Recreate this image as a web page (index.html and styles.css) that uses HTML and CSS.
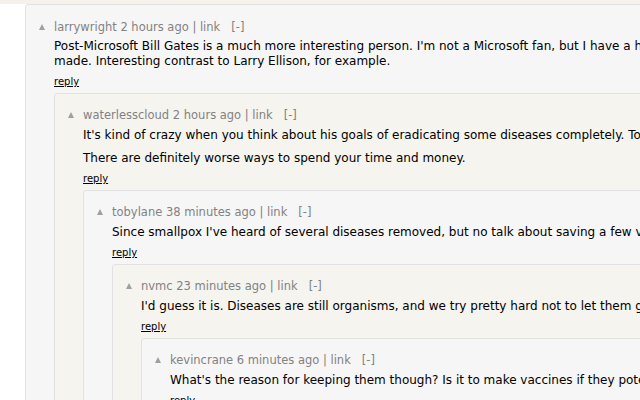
FILE: index.html
```html
<!DOCTYPE html>
<html>
<head>
<meta charset="utf-8">
<link rel="stylesheet" href="styles.css">
</head>
<body>
<div class="topbar"></div>
<div class="thread">
  <div class="comment gray">
    <div class="head"><span class="vote"></span><span class="meta">larrywright 2 hours ago | link</span><span class="toggle">[-]</span></div>
    <div class="body">
      <p>Post-Microsoft Bill Gates is a much more interesting person. I'm not a Microsoft fan, but I have a huge amount of respect for the choices he's<br>made. Interesting contrast to Larry Ellison, for example.</p>
      <a class="reply" href="#">reply</a>
      <div class="comment beige">
        <div class="head"><span class="vote"></span><span class="meta">waterlesscloud 2 hours ago | link</span><span class="toggle">[-]</span></div>
        <div class="body">
          <p>It's kind of crazy when you think about his goals of eradicating some diseases completely. Totally within reach, too.</p>
          <p>There are definitely worse ways to spend your time and money.</p>
          <a class="reply" href="#">reply</a>
          <div class="comment gray">
            <div class="head"><span class="vote"></span><span class="meta">tobylane 38 minutes ago | link</span><span class="toggle">[-]</span></div>
            <div class="body">
              <p>Since smallpox I've heard of several diseases removed, but no talk about saving a few viruses in a lab somewhere.</p>
              <a class="reply" href="#">reply</a>
              <div class="comment beige">
                <div class="head"><span class="vote"></span><span class="meta">nvmc 23 minutes ago | link</span><span class="toggle">[-]</span></div>
                <div class="body">
                  <p>I'd guess it is. Diseases are still organisms, and we try pretty hard not to let them go extinct.</p>
                  <a class="reply" href="#">reply</a>
                  <div class="comment gray">
                    <div class="head"><span class="vote"></span><span class="meta">kevincrane 6 minutes ago | link</span><span class="toggle">[-]</span></div>
                    <div class="body">
                      <p>What's the reason for keeping them though? Is it to make vaccines if they potentially come back?</p>
                      <a class="reply" href="#">reply</a>
                    </div>
                  </div>
                </div>
              </div>
            </div>
          </div>
        </div>
      </div>
    </div>
  </div>
</div>
</body>
</html>
```
FILE: styles.css
```css
html, body {
  margin: 0;
  padding: 0;
  background: #ffffff;
  overflow: hidden;
  width: 640px;
  height: 400px;
}
body {
  font-family: "DejaVu Sans", Verdana, sans-serif;
  color: #000;
}
.topbar {
  height: 4px;
  background: #f4f2ea;
}
.thread {
  width: 1400px;
  padding-left: 25px;
}
.comment {
  border: 1px solid #e2e2e2;
  border-radius: 3px;
  padding: 14px 0 0 13px;
  margin-top: 5px;
}
.thread > .comment {
  margin-top: 0;
  padding-top: 15px;
}
.thread > .comment > .body {
  padding-top: 5px;
}
.gray { background: #f6f6f6; }
.beige { background: #f5f4ef; }
.head {
  display: flex;
  align-items: center;
  font-size: 11.5px;
  line-height: 14px;
  color: #828282;
  white-space: nowrap;
}
.vote {
  width: 0;
  height: 0;
  border-left: 3.5px solid transparent;
  border-right: 3.5px solid transparent;
  border-bottom: 6px solid #a0a0a0;
  margin-right: 9px;
  margin-top: -1px;
}
.toggle {
  margin-left: 11px;
}
.body {
  margin-left: 15px;
  padding-top: 6px;
}
.body p {
  margin: 0 0 8px 0;
  font-size: 12px;
  line-height: 15px;
  white-space: nowrap;
}
.reply {
  display: block;
  font-size: 10px;
  line-height: 13px;
  color: #000;
  text-decoration: underline;
  width: max-content;
  margin-top: -2px;
}
```
